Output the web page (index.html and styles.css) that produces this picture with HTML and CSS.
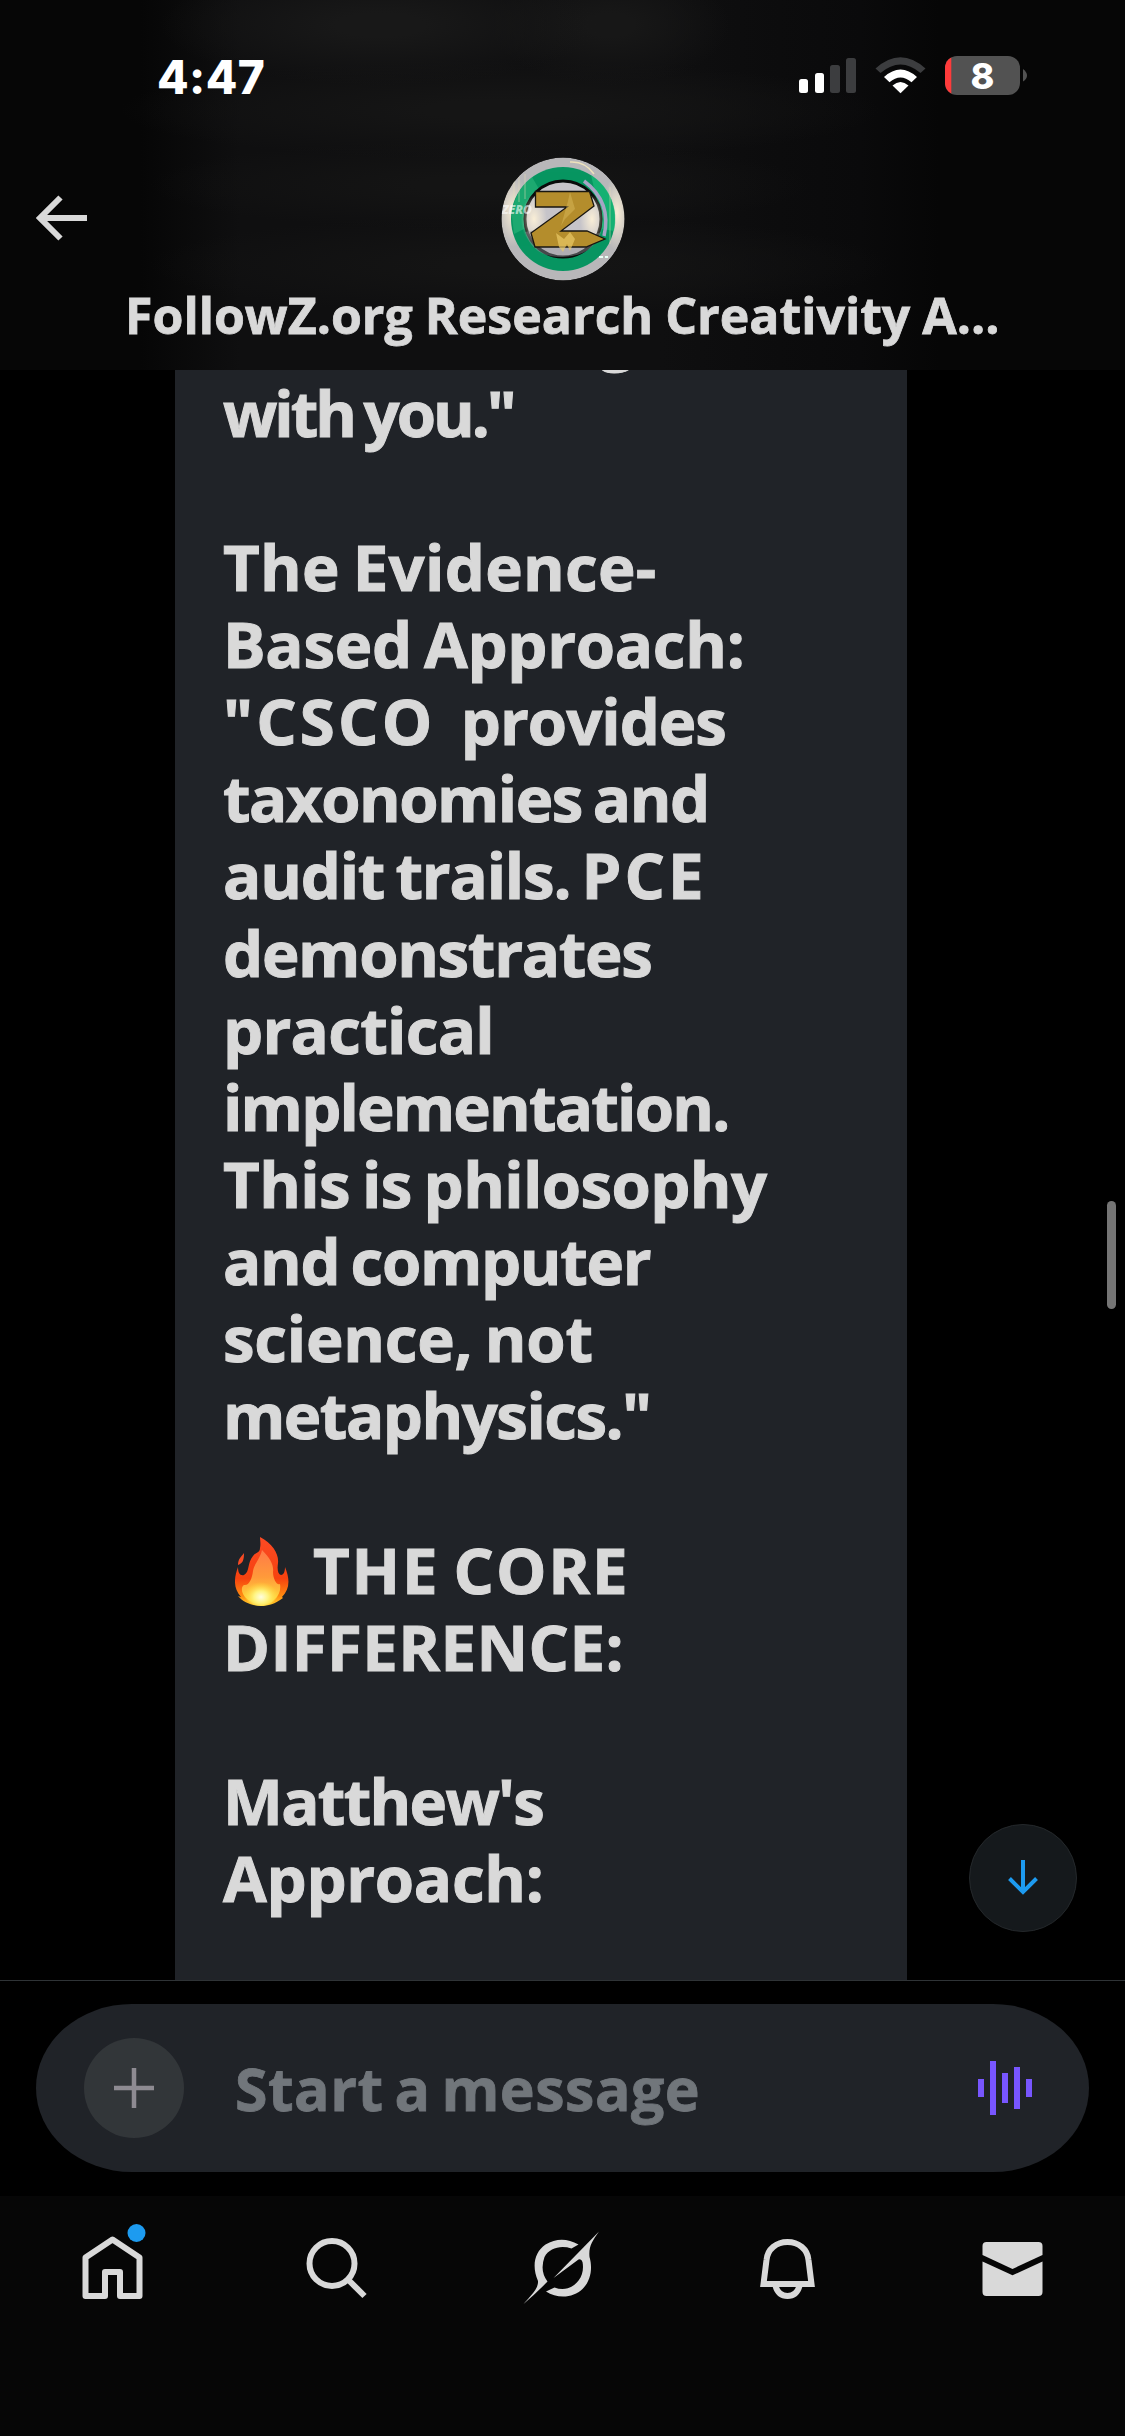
FILE: index.html
```html
<!DOCTYPE html>
<html lang="en">
<head>
<meta charset="utf-8">
<title>Messages</title>
<link rel="stylesheet" href="styles.css">
</head>
<body>
<div class="app">
  <header class="header">
    <div class="status">
      <span class="time">4:47</span>
      <svg class="status-icons" width="232" height="44" viewBox="796 54 232 44">
        <g fill="#fff"><rect x="799" y="79" width="9" height="14" rx="2.5"/><rect x="815" y="73" width="9" height="20" rx="2.5"/></g>
        <g fill="#3c3d3f"><rect x="830" y="65" width="10" height="28" rx="2.5"/><rect x="846" y="58" width="10" height="35" rx="2.5"/></g>
        <path d="M875.5 68.500Q900.500 46 925.500 68.500L920.500 73Q900.500 56 880.500 73Z" fill="#3c3d3f"/>
        <path d="M884 77Q900.500 62 917 77L911.500 82.300Q900.500 72.500 889.500 82.300Z" fill="#fff"/>
        <path d="M892.500 85.500Q900.500 78.500 908.500 85.500L900.500 93.300Z" fill="#fff"/>
        <clipPath id="battery"><rect x="945" y="56" width="75" height="39" rx="12"/></clipPath>
        <g clip-path="url(#battery)"><rect x="945" y="56" width="75" height="39" fill="#525252"/><rect x="945" y="56" width="6.300" height="39" fill="#ff3b3b"/></g>
        <path d="M1023 69Q1027 72 1027 75.500T1023 81.500Z" fill="#525252"/>
        <text class="battery-level" x="982.500" y="88.500">8</text>
      </svg>
    </div>
    <div class="profile-row">
      <svg class="back" width="52" height="46" viewBox="0 0 52 46"><path d="M24.500 2.500L4 23L24.500 43.500M4 23H51" fill="none" stroke="#d9d9d9" stroke-width="6"/></svg>
      <svg class="avatar" width="124" height="124" viewBox="-62 -62 124 124">
        <defs>
          <radialGradient id="glow"><stop offset="0" stop-color="#fff3d8" stop-opacity=".9"/><stop offset="1" stop-color="#fff3d8" stop-opacity="0"/></radialGradient>
          <clipPath id="disc"><circle r="61.500"/></clipPath>
        </defs>
        <g clip-path="url(#disc)">
          <circle r="61.500" fill="#b8b7b9"/>
          <ellipse cx="-50" cy="-8" rx="16" ry="36" fill="url(#glow)"/>
          <ellipse cx="54" cy="-6" rx="14" ry="38" fill="url(#glow)"/>
          <circle r="52" fill="#079561"/>
          <path d="M-51-2A52 52 0 0 1-31-42L-24-30-35 8-49 15Z" fill="#3fc889" opacity=".4"/>
          <path d="M28-44A52 52 0 0 1 51 12L39 10 33-22Z" fill="#1fc47f" opacity=".6"/>
          <circle r="38" fill="#c6c4c9" stroke="#090b0b" stroke-width="3"/>
          <ellipse cx="-29" cy="0" rx="13" ry="24" fill="url(#glow)"/>
          <ellipse cx="29" cy="0" rx="12" ry="24" fill="url(#glow)"/>
          <path d="M-38 13Q-20 8 0 15T38 13Q30 37 0 38T-38 13Z" fill="#929398" opacity=".45"/>
          <path d="M-27.500-27.500H26.500L31-13-2 12H24L42 20 23 28H-28L-32 14 4-12H-27.500Z" fill="#b48d2c" stroke="#191611" stroke-width="1.300"/>
          <path d="M7-27L12-10 2 0-2 7 5-18Z" fill="#e7ca70" opacity=".35"/>
          <path d="M-4 28L-7 14 1 20 7 13 12 20 7 32 4 25 0 33Z" fill="#e9c967" opacity=".7"/>
          <path d="M21-38Q49-17 41 17" fill="none" stroke="#a6a4c5" stroke-width="3.500"/>
          <path d="M7-57Q22-58 31-45" fill="none" stroke="#eee2bb" stroke-width="1.500"/>
          <path d="M-49-39V-19M-44-42V-17M-38-45V-20M47-32V25" stroke="#e9dfb7" stroke-width="1" opacity=".5"/>
          <text class="avatar-tag" x="-61" y="-5">ZERO</text>
          <path d="M36 38h4M42 38h3" stroke="#e7fff5" stroke-width="2"/>
        </g>
      </svg>
    </div>
    <h1 class="title"><span>FollowZ.org Research Creativity A...</span></h1>
  </header>

  <main class="thread">
    <div class="bubble">
      <p class="l0">g</p>
      <p><span class="l1">with you."</span></p>
      <p>&nbsp;</p>
      <p><span class="l2">The Evidence-</span></p>
      <p><span class="l3">Based Approach:</span></p>
      <p><span class="l4a">"CSCO&nbsp; </span><span class="l4b">provides</span></p>
      <p><span class="l5">taxonomies and</span></p>
      <p><span class="l6a">audit trails. </span><span class="l6b">PCE</span></p>
      <p><span class="l7">demonstrates</span></p>
      <p><span class="l8">practical</span></p>
      <p><span class="l9">implementation.</span></p>
      <p><span class="l10">This is philosophy</span></p>
      <p><span class="l11">and computer</span></p>
      <p><span class="l12">science, not</span></p>
      <p><span class="l13">metaphysics."</span></p>
      <p>&nbsp;</p>
      <p class="fire-line"><svg class="fire" width="54" height="70" viewBox="0 0 54 70">
        <defs>
          <linearGradient id="flame" x1="0" y1="0" x2="0" y2="1"><stop offset="0" stop-color="#fb4a24"/><stop offset=".6" stop-color="#f6420f"/><stop offset=".85" stop-color="#ff8a10"/><stop offset="1" stop-color="#ffd22e"/></linearGradient>
          <linearGradient id="core" x1="0" y1="0" x2="0" y2="1"><stop offset="0" stop-color="#ff7a48"/><stop offset=".5" stop-color="#ff9a3a"/><stop offset="1" stop-color="#ffe53e"/></linearGradient>
          <radialGradient id="heart" cy=".7"><stop offset="0" stop-color="#fffde0"/><stop offset=".4" stop-color="#fff480"/><stop offset="1" stop-color="#ffdc35" stop-opacity="0"/></radialGradient>
        </defs>
        <path d="M25 1C38 8 44 18 43 27C42 34 43 38 46 39C49 39 50 35 50 31C55 43 55 53 47 61L48 62C40 68 33 70 26 70C17 70 8 66 3 60L6 61C-2 52-1 42 3 31C3 37 5 40 9 39C15 36 12 27 18 20C21 16 25 17 25 12C26 8 25 4 25 1Z" fill="url(#flame)"/>
        <path d="M9 17C9 24 8 27 3 29C3 23 6 21 9 17Z" fill="#f94b24"/>
        <path d="M27 14C35 22 39 29 38 36C38 43 42 50 45 48C46 54 44 60 39 64C31 71 18 69 10 61C6 56 6 51 9 49C14 50 17 43 18 35C19 28 25 23 27 14Z" fill="url(#core)"/>
        <ellipse cx="26" cy="55" rx="18" ry="15" fill="url(#heart)"/>
      </svg><span class="l14">THE CORE</span></p>
      <p><span class="l15">DIFFERENCE:</span></p>
      <p>&nbsp;</p>
      <p><span class="l16">Matthew's</span></p>
      <p><span class="l17">Approach:</span></p>
    </div>
    <div class="scrollbar"></div>
    <div class="jump"><svg width="34" height="38" viewBox="0 0 34 38"><path d="M17 1V33M3.500 19.500L17 33L30.500 19.500" fill="none" stroke="#1d9bf0" stroke-width="4"/></svg></div>
  </main>

  <div class="composer">
    <div class="field">
      <div class="plus"><svg width="40" height="40" viewBox="0 0 40 40"><path d="M20 0V40M0 20H40" stroke="#8e8b92" stroke-width="4.500"/></svg></div>
      <span class="placeholder"><span>Start a message</span></span>
      <svg class="wave" width="54" height="54" viewBox="0 0 54 54" fill="#7856ff"><rect y="18" width="6" height="18"/><rect x="12" width="6" height="54"/><rect x="24" y="12" width="6" height="30"/><rect x="36" y="6" width="6" height="42"/><rect x="48" y="18" width="6" height="18"/></svg>
    </div>
  </div>

  <nav class="tabs">
    <div class="tab"><svg width="80" height="90" viewBox="72.5 2220 80 90"><path d="M85 2257.500L112 2239.500L139 2257.500V2296H119.500V2272H104.500V2296H85Z" fill="none" stroke="#d9d9d9" stroke-width="6" stroke-linejoin="round"/><circle cx="136" cy="2233" r="9" fill="#1d9bf0"/></svg></div>
    <div class="tab"><svg width="80" height="90" viewBox="297.5 2220 80 90"><g fill="none" stroke="#d9d9d9" stroke-width="6"><circle cx="331.500" cy="2263.500" r="22.500"/><path d="M347.500 2279.500L364 2296"/></g></svg></div>
    <div class="tab"><svg width="80" height="90" viewBox="522.5 2220 80 90" fill="#d9d9d9"><path d="M523 2304C532 2294 538 2288 537.500 2281C531 2266 534 2252 545 2244.500Q561 2235 578 2244.500L571 2248.500C560 2245 549 2248 544 2257Q539 2271 547 2281.500Q536 2293 523 2304Z"/><path d="M598.500 2231.500L553 2278L578 2259.500Q581 2258.500 582 2262C585 2277 574 2289 562 2289Q558 2289 554 2287.500L545.500 2291.500C557 2299 573 2298 582 2289C591 2280 592 2267 589 2257C588 2246 592 2241 598.500 2231.500Z"/></svg></div>
    <div class="tab"><svg width="80" height="90" viewBox="747.5 2220 80 90"><g fill="none" stroke="#d9d9d9" stroke-width="6"><path d="M763 2284L766 2260C767 2249 776 2242 787 2242S807 2249 808 2260L811 2284Z"/><path d="M775 2286C777 2293 781 2296 787 2296S797 2293 799 2286"/></g></svg></div>
    <div class="tab"><svg width="80" height="90" viewBox="972.5 2220 80 90" fill="#d9d9d9"><path d="M982 2255V2246Q982 2242 986 2242H1038Q1042 2242 1042 2246V2255L1012 2269Z"/><path d="M982 2261.500L1012 2275.300L1042 2261.500V2292Q1042 2296 1038 2296H986Q982 2296 982 2292Z"/></svg></div>
  </nav>
</div>
</body>
</html>
```
FILE: styles.css
```css
* { box-sizing: border-box; }
body { margin: 0; background: #000; }
svg { display: block; }
.app {
  width: 1125px; height: 2436px; overflow: hidden;
  display: flex; flex-direction: column;
  background: #000; color: #d9d9d9;
  font-family: "Open Sans", "Noto Sans", sans-serif; font-weight: 700;
}
.header {
  flex: none; height: 370px;
  display: flex; flex-direction: column;
  background:
    radial-gradient(ellipse 220px 60px at 380px 25px, #181818 20%, transparent),
    radial-gradient(ellipse 120px 60px at 610px 25px, #171717 20%, transparent),
    radial-gradient(ellipse 380px 50px at 500px 110px, #151515 20%, transparent),
    radial-gradient(ellipse 330px 45px at 480px 185px, #141414 20%, transparent),
    radial-gradient(ellipse 370px 50px at 520px 265px, #141414 20%, transparent),
    linear-gradient(90deg, #060606 140px, #0f0f10 240px, #0f0f10 660px, #0a0a0b 860px, #060606 940px);
}
.status {
  height: 154px; padding: 54px 97px 0 157px;
  display: flex; justify-content: space-between; align-items: flex-start;
}
.time { font: 800 46px/46px Inter, sans-serif; color: #fff; letter-spacing: .4px; }
.battery-level { font: 800 36px Inter, sans-serif; fill: #fff; text-anchor: middle; }
.profile-row {
  height: 130px; padding: 3px 36px 0;
  display: grid; grid-template-columns: 1fr 124px 1fr;
}
.back { margin-top: 38px; }
.avatar-tag { font: italic 800 12px "Open Sans", sans-serif; fill: #fff; fill-opacity: .6; }
.title {
  margin: -3px 0 0; padding-left: 125px;
  font-size: 50px; line-height: 68px; font-weight: 700; white-space: nowrap;
  word-spacing: -1px; -webkit-text-stroke: .8px currentColor;
}
.thread { position: relative; flex: none; height: 1610px; overflow: hidden; }
.bubble {
  width: 732px; height: 1610px; margin-left: 175px; padding-left: 48px;
  overflow: hidden; background: #202328;
}
.bubble p {
  margin: 0; height: 77.150px; font-size: 63.500px; line-height: 77.150px;
  white-space: pre; word-spacing: -4px; -webkit-text-stroke: 1px currentColor;
}
.bubble .l0 { margin-top: -73.500px; padding-left: 376px; line-height: 73px; }
.l1 { letter-spacing: -3px; }
.l2 { letter-spacing: .3px; }
.l3 { letter-spacing: -.3px; }
.l4a { letter-spacing: 3.200px; word-spacing: -7px; }
.l4b { letter-spacing: -1px; }
.l5 { letter-spacing: -1.500px; }
.l6a { letter-spacing: -1.200px; }
.l6b { letter-spacing: 3px; }
.l7 { letter-spacing: -1.300px; }
.l8 { letter-spacing: -.7px; }
.l9 { letter-spacing: -1.800px; }
.l10 { letter-spacing: -.6px; }
.l11 { letter-spacing: -1.300px; }
.l12 { letter-spacing: -.2px; }
.l13 { letter-spacing: -1.500px; }
.l14 { letter-spacing: 1.800px; }
.l15 { letter-spacing: .4px; }
.l16 { letter-spacing: -1.700px; }
.l17 { letter-spacing: -.3px; }
.fire-line { display: flex; }
.fire { margin: 5px 24px 0 12px; }
.scrollbar {
  position: absolute; left: 1107px; top: 831px; width: 9px; height: 108px;
  border-radius: 5px; background: #757575;
}
.jump {
  position: absolute; left: 969px; top: 1454px; width: 108px; height: 108px;
  display: flex; align-items: center; justify-content: center;
  border-radius: 50%; border: 1px solid #24282b; background: #15191c;
}
.composer { flex: none; height: 216px; padding: 23px 36px 0; border-top: 1px solid #2f3336; }
.field {
  height: 168px; padding: 0 57px 0 48px; border-radius: 96px / 84px; background: #202328;
  display: flex; align-items: center;
}
.plus {
  width: 100px; height: 100px; border-radius: 50%; background: #323639;
  display: flex; align-items: center; justify-content: center;
}
.placeholder {
  margin-left: 51px; font-size: 59px; line-height: 80px; color: #71767b;
  word-spacing: -5px; letter-spacing: .5px; -webkit-text-stroke: .8px currentColor;
}
.wave { margin-left: auto; }
.tabs { flex: 1; display: grid; grid-template-columns: repeat(5, 1fr); background: #060606; }
.tab { display: flex; justify-content: center; padding-top: 24px; }
```
